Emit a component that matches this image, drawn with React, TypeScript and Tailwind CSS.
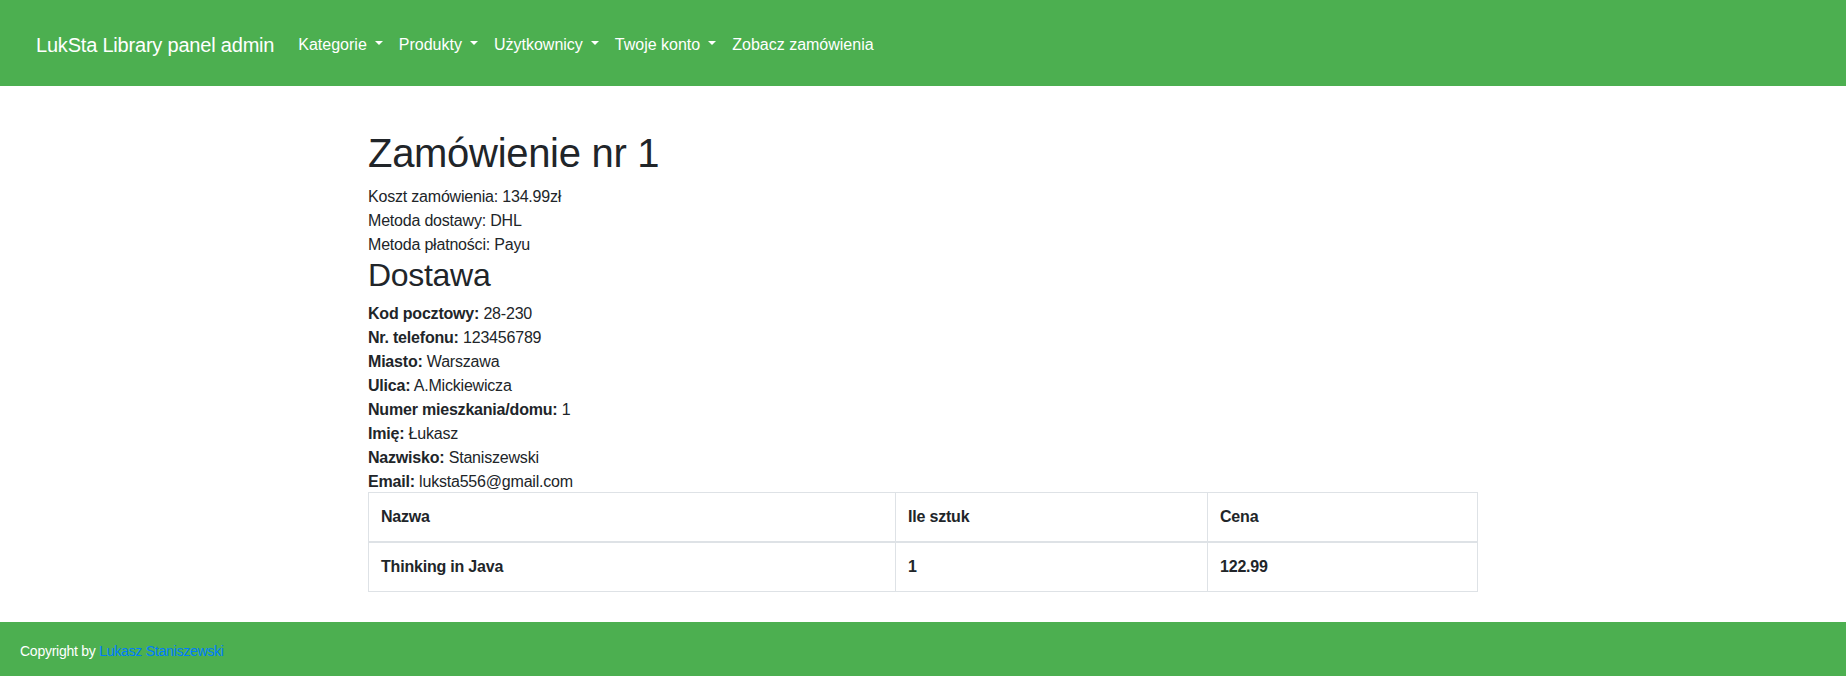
import React from "react";

const Caret = () => (
  <span className="ml-[8px] inline-block align-[5px] w-0 h-0 border-t-[4px] border-t-white border-x-[4px] border-x-transparent" />
);

export default function App() {
  const navItems = [
    { label: "Kategorie", caret: true },
    { label: "Produkty", caret: true },
    { label: "Użytkownicy", caret: true },
    { label: "Twoje konto", caret: true },
    { label: "Zobacz zamówienia", caret: false },
  ];
  const rows: [string, string][] = [
    ["Kod pocztowy:", "28-230"],
    ["Nr. telefonu:", "123456789"],
    ["Miasto:", "Warszawa"],
    ["Ulica:", "A.Mickiewicza"],
    ["Numer mieszkania/domu:", "1"],
    ["Imię:", "Łukasz"],
    ["Nazwisko:", "Staniszewski"],
    ["Email:", "luksta556@gmail.com"],
  ];
  return (
    <div
      className="min-h-[676px] flex flex-col bg-white text-[#212529] text-[16px] leading-[24px] tracking-[-0.2px]"
      style={{ fontFamily: '"Liberation Sans", Arial, sans-serif' }}
    >
      <nav className="h-[86px] bg-[#4caf50] flex items-center pl-[36px] pt-[3px]">
        <span className="text-white text-[20px] leading-[30px] mr-[16px] tracking-[-0.2px]">LukSta Library panel admin</span>
        <ul className="flex items-center tracking-normal">
          {navItems.map((n) => (
            <li key={n.label} className="px-[8px] text-white text-[16px] leading-[24px] whitespace-nowrap">
              {n.label}
              {n.caret && <Caret />}
            </li>
          ))}
        </ul>
      </nav>

      <main className="flex-1 w-[1110px] mx-auto pt-[43px] pb-[30px]">
        <h1 className="text-[40px] leading-[48px] font-normal mb-[8px] tracking-[-0.3px]">Zamówienie nr 1</h1>
        <p>Koszt zamówienia: 134.99zł</p>
        <p>Metoda dostawy: DHL</p>
        <p>Metoda płatności: Payu</p>
        <h2 className="text-[32px] leading-[37px] font-normal mb-[8px] tracking-[-0.3px]">Dostawa</h2>
        {rows.map(([k, v]) => (
          <p key={k}>
            <b className="font-bold">{k}</b> {v}
          </p>
        ))}
        <table className="w-full -mt-[2px] border-collapse border border-[#dee2e6] text-left">
          <thead>
            <tr>
              <th className="w-[527px] border border-[#dee2e6] border-b-2 px-[12px] py-[12px] font-bold">Nazwa</th>
              <th className="w-[312px] border border-[#dee2e6] border-b-2 px-[12px] py-[12px] font-bold">Ile sztuk</th>
              <th className="border border-[#dee2e6] border-b-2 px-[12px] py-[12px] font-bold">Cena</th>
            </tr>
          </thead>
          <tbody>
            <tr>
              <td className="border border-[#dee2e6] px-[12px] py-[12px] font-bold">Thinking in Java</td>
              <td className="border border-[#dee2e6] px-[12px] py-[12px] font-bold">1</td>
              <td className="border border-[#dee2e6] px-[12px] py-[12px] font-bold">122.99</td>
            </tr>
          </tbody>
        </table>
      </main>

      <footer className="h-[54px] bg-[#4caf50] flex items-center pl-[20px] pt-[3px] text-[14px] text-white tracking-[-0.25px]">
        <span>
          Copyright by <a className="text-[#007bff]">Lukasz Staniszewski</a>
        </span>
      </footer>
    </div>
  );
}
